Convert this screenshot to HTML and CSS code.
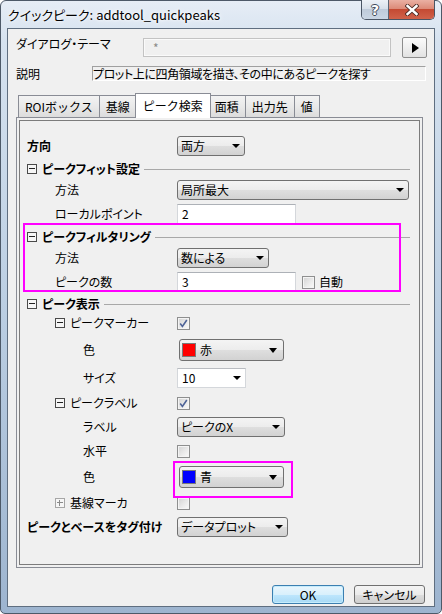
FILE: index.html
```html
<!DOCTYPE html>
<html lang="ja">
<head>
<meta charset="utf-8">
<title>クイックピーク</title>
<link rel="stylesheet" href="styles.css">
</head>
<body>
<div class="window">
  <div class="titlebar">
    <span class="title">クイックピーク: addtool_quickpeaks</span>
    <div class="caption-btns">
      <div class="cbtn help">?</div>
      <div class="cbtn close">
        <svg width="14" height="12" viewBox="0 0 14 12">
          <path d="M2.5 2 L11.5 10 M11.5 2 L2.5 10" stroke="#4a2a24" stroke-width="4.2" stroke-linecap="square" fill="none"/>
          <path d="M2.5 2 L11.5 10 M11.5 2 L2.5 10" stroke="#ffffff" stroke-width="2.4" stroke-linecap="square" fill="none"/>
        </svg>
      </div>
    </div>
  </div>
  <div class="client">
    <div class="theme-row">
      <span class="theme-label">ダイアログ・テーマ</span>
      <div class="theme-input">*</div>
      <div class="arrow-btn"><span class="tri-right"></span></div>
    </div>
    <div class="desc-row">
      <span class="desc-label">説明</span>
      <div class="desc-box">プロット上に四角領域を描き、その中にあるピークを探す</div>
    </div>
    <div class="tabs">
      <div class="tab">ROIボックス</div>
      <div class="tab">基線</div>
      <div class="tab active">ピーク検索</div>
      <div class="tab">面積</div>
      <div class="tab">出力先</div>
      <div class="tab">値</div>
    </div>
    <div class="panel">
      <div class="panel-inner">
        <div class="grid">
          <div class="lbl bold">方向</div>
          <div class="ctl"><div class="dd w68"><span class="dd-text">両方</span><span class="caret"></span></div></div>

          <div class="section"><span class="tbox minus"></span><span class="sec-text">ピークフィット設定</span><span class="sec-line"></span></div>

          <div class="lbl l1">方法</div>
          <div class="ctl"><div class="dd w232"><span class="dd-text">局所最大</span><span class="caret"></span></div></div>

          <div class="lbl l1">ローカルポイント</div>
          <div class="ctl"><div class="edit">2</div></div>

          <div class="section"><span class="tbox minus"></span><span class="sec-text">ピークフィルタリング</span><span class="sec-line"></span></div>

          <div class="lbl l1">方法</div>
          <div class="ctl"><div class="dd w92"><span class="dd-text">数による</span><span class="caret"></span></div></div>

          <div class="lbl l1">ピークの数</div>
          <div class="ctl"><div class="edit">3</div><span class="cb auto-cb"></span><span class="cb-label">自動</span></div>

          <div class="section"><span class="tbox minus"></span><span class="sec-text">ピーク表示</span><span class="sec-line"></span></div>

          <div class="lbl l1 tree-lbl"><span class="tbox minus"></span><span class="tree-text">ピークマーカー</span></div>
          <div class="ctl"><span class="cb checked"><svg width="9" height="9" viewBox="0 0 9 9"><path d="M1.2 4.6 L3.4 7.4 L7.8 1" stroke="#4e6397" stroke-width="1.6" fill="none"/></svg></span></div>

          <div class="lbl l2">色</div>
          <div class="ctl"><div class="dd color-dd"><span class="swatch red"></span><span class="dd-text">赤</span><span class="caret big"></span></div></div>

          <div class="lbl l2">サイズ</div>
          <div class="ctl"><div class="combo"><span class="dd-text">10</span><span class="caret"></span></div></div>

          <div class="lbl l1 tree-lbl"><span class="tbox minus"></span><span class="tree-text">ピークラベル</span></div>
          <div class="ctl"><span class="cb checked"><svg width="9" height="9" viewBox="0 0 9 9"><path d="M1.2 4.6 L3.4 7.4 L7.8 1" stroke="#4e6397" stroke-width="1.6" fill="none"/></svg></span></div>

          <div class="lbl l2">ラベル</div>
          <div class="ctl"><div class="dd w108"><span class="dd-text">ピークのX</span><span class="caret"></span></div></div>

          <div class="lbl l2">水平</div>
          <div class="ctl"><span class="cb"></span></div>

          <div class="lbl l2">色</div>
          <div class="ctl"><div class="dd color-dd"><span class="swatch blue"></span><span class="dd-text">青</span><span class="caret big"></span></div></div>

          <div class="lbl l1 tree-lbl"><span class="tbox plus"></span><span class="tree-text">基線マーカ</span></div>
          <div class="ctl"><span class="cb"></span></div>

          <div class="lbl bold">ピークとベースをタグ付け</div>
          <div class="ctl"><div class="dd w111"><span class="dd-text">データプロット</span><span class="caret"></span></div></div>
        </div>
      </div>
      <div class="highlight hl-filter"></div>
      <div class="highlight hl-color"></div>
    </div>
    <div class="buttons">
      <div class="btn default">OK</div>
      <div class="btn">キャンセル</div>
    </div>
  </div>
</div>
</body>
</html>
```
FILE: styles.css
```css
* { box-sizing: border-box; }
html, body { margin: 0; padding: 0; }
body {
  width: 442px;
  height: 614px;
  overflow: hidden;
  background: #ffffff;
  font-family: "Noto Sans CJK JP", "Noto Sans", sans-serif;
  font-size: 12px;
  color: #000;
  font-feature-settings: "palt";
}

.window {
  width: 442px;
  height: 614px;
  border: 1px solid #4d5968;
  border-radius: 6px 6px 5px 5px;
  background: linear-gradient(to bottom, #e6edf6 0px, #d6e2ef 40px, #bccfe3 300px, #9db4cf 614px);
  padding: 0 6px 6px;
  display: flex;
  flex-direction: column;
}

.titlebar {
  height: 27px;
  display: flex;
  align-items: center;
  padding-left: 1px;
  flex-shrink: 0;
}
.title {
  font-size: 13px;
  line-height: 16px;
  white-space: nowrap;
  color: #000;
  text-shadow: 0 0 6px #ffffff, 0 0 3px #ffffff;
}
.caption-btns {
  margin-left: auto;
  align-self: flex-start;
  margin-top: -1px;
  height: 20px;
  display: flex;
  border: 1px solid #4a5564;
  border-top: none;
  border-radius: 0 0 5px 5px;
  overflow: hidden;
}
.cbtn {
  height: 19px;
  display: flex;
  align-items: center;
  justify-content: center;
}
.help {
  width: 27px;
  border-right: 1px solid #5b6675;
  background: linear-gradient(to bottom, #edf1f6 0%, #d8e0ea 45%, #bfcbda 50%, #cad6e4 100%);
  color: #fff;
  font-weight: bold;
  font-size: 14px;
  font-family: "DejaVu Sans", sans-serif;
  text-shadow: 1px 0 0 #3f4a58, -1px 0 0 #3f4a58, 0 1px 0 #3f4a58, 0 -1px 0 #3f4a58;
}
.close {
  width: 45px;
  background: linear-gradient(to bottom, #eab0a3 0%, #dc8b79 45%, #c44a33 50%, #d0624a 100%);
}

.client {
  height: 579px;
  border: 1px solid #5f6e80;
  background: #f0f0f0;
  padding: 8px 0 0 8px;
  display: flex;
  flex-direction: column;
}

.theme-row {
  height: 21px;
  display: flex;
  align-items: flex-start;
}
.theme-label {
  width: 127px;
  line-height: 14px;
  white-space: nowrap;
}
.theme-input {
  width: 248px;
  height: 19px;
  margin-top: 1px;
  border: 1px solid #c3c3c3;
  box-shadow: inset 0 0 0 1px #fafafa;
  background: #f0f0f0;
  color: #8a8a8a;
  padding: 2px 0 0 9px;
  line-height: 14px;
}
.arrow-btn {
  width: 25px;
  height: 21px;
  margin-left: 11px;
  border: 1px solid #8d8d8d;
  border-radius: 2px;
  background: linear-gradient(to bottom, #fbfbfb 0%, #efefef 50%, #e2e2e2 100%);
  display: flex;
  align-items: center;
  justify-content: center;
}
.tri-right {
  width: 0;
  height: 0;
  border-top: 5px solid transparent;
  border-bottom: 5px solid transparent;
  border-left: 7px solid #000;
  margin-left: 2px;
}

.desc-row {
  margin-top: 8px;
  height: 15px;
  display: flex;
}
.desc-label {
  width: 76px;
  line-height: 15px;
}
.desc-box {
  width: 334px;
  height: 15px;
  border-top: 1px solid #a0a0a0;
  border-left: 1px solid #a0a0a0;
  border-bottom: 1px solid #ffffff;
  border-right: 1px solid #ffffff;
  line-height: 13px;
  letter-spacing: -0.4px;
  white-space: nowrap;
  overflow: hidden;
}

.tabs {
  margin-top: 12px;
  height: 24px;
  display: flex;
  align-items: flex-end;
  padding-left: 2px;
  position: relative;
  z-index: 2;
}
.tab {
  height: 22px;
  padding: 0 6px;
  border: 1px solid #898c95;
  border-bottom: none;
  margin-left: -1px;
  background: linear-gradient(to bottom, #f3f3f3 0%, #e9e9e9 50%, #dcdcdc 100%);
  line-height: 21px;
  white-space: nowrap;
  font-feature-settings: normal;
}
.tab:first-child { margin-left: 0; }
.tab.active {
  height: 25px;
  margin-bottom: -1px;
  margin-left: -2px;
  margin-right: -2px;
  padding: 0 7px;
  background: #ffffff;
  position: relative;
  z-index: 1;
  line-height: 23px;
}

.panel {
  width: 407px;
  height: 451px;
  border: 1px solid #898c95;
  padding: 2px;
  position: relative;
  background: #f0f0f0;
  flex-shrink: 0;
}
.panel-inner {
  height: 100%;
  border: 1px solid #7c7c7c;
}
.grid {
  display: grid;
  grid-template-columns: 150px 1fr;
  grid-template-rows: 24px 22px 20px 28px 18px 24px 24px 20px 18px 36px 20px 30px 18px 30px 22px 30px 18px;
  align-items: center;
  padding: 13px 9px 0 7px;
}
.lbl {
  line-height: 14px;
  white-space: nowrap;
}
.bold { font-weight: bold; }
.l1 { padding-left: 28px; }
.l2 { padding-left: 56px; }
.tree-lbl {
  display: flex;
  align-items: center;
}
.tree-text { margin-left: 5px; }
.ctl {
  display: flex;
  align-items: center;
  height: 100%;
}

.section {
  grid-column: 1 / -1;
  display: flex;
  align-items: center;
}
.sec-text {
  font-weight: bold;
  margin-left: 5px;
  line-height: 14px;
  white-space: nowrap;
}
.sec-line {
  flex: 1;
  height: 1px;
  background: #a8a8a8;
  margin-left: 4px;
}

.tbox {
  width: 10px;
  height: 10px;
  border: 1px solid #4a4a4a;
  background: #f6f6f6;
  position: relative;
  flex-shrink: 0;
}
.tbox::before {
  content: "";
  position: absolute;
  left: 1px;
  right: 1px;
  top: 3px;
  height: 1px;
  background: #222;
}
.tbox.plus {
  border-color: #a6a6a6;
}
.tbox.plus::before { background: #8a8a8a; }
.tbox.plus::after {
  content: "";
  position: absolute;
  top: 1px;
  bottom: 1px;
  left: 3px;
  width: 1px;
  background: #8a8a8a;
}

.dd {
  height: 20px;
  border: 1px solid #707070;
  border-radius: 3px;
  background: linear-gradient(to bottom, #f4f4f4 0%, #ececec 50%, #dedede 52%, #d2d2d2 100%);
  display: flex;
  align-items: center;
  padding-left: 3px;
  white-space: nowrap;
}
.dd-text {
  flex: 1;
  line-height: 14px;
}
.caret {
  width: 0;
  height: 0;
  border-left: 4px solid transparent;
  border-right: 4px solid transparent;
  border-top: 4px solid #000;
  margin-right: 4px;
}
.caret.big {
  border-left-width: 4px;
  border-right-width: 4px;
  border-top-width: 5px;
  margin-right: 6px;
}
.w68 { width: 68px; }
.w92 { width: 92px; }
.w108 { width: 108px; }
.w111 { width: 111px; }
.w232 { width: 232px; }
.color-dd {
  width: 105px;
  height: 22px;
  margin-left: 2px;
  padding-left: 2px;
}
.swatch {
  width: 14px;
  height: 14px;
  border: 1px solid #7a7a7a;
  margin-right: 4px;
  flex-shrink: 0;
}
.swatch.red { background: #ff0000; }
.swatch.blue { background: #0000ff; }

.combo {
  width: 69px;
  height: 20px;
  border: 1px solid #d4d7db;
  border-top-color: #b9bcc1;
  background: #ffffff;
  display: flex;
  align-items: center;
  padding-left: 4px;
}

.edit {
  width: 119px;
  height: 20px;
  border: 1px solid #d4d7db;
  border-top-color: #adb1b7;
  background: #ffffff;
  padding-left: 4px;
  line-height: 18px;
}

.cb {
  width: 13px;
  height: 13px;
  border: 1px solid #8e8f8f;
  background: linear-gradient(135deg, #d2d2d2 0%, #ececec 60%, #fafafa 100%);
  box-shadow: inset 0 0 0 1px #f4f4f4;
  display: flex;
  align-items: center;
  justify-content: center;
  flex-shrink: 0;
}
.auto-cb { margin-left: 6px; }
.cb-label { margin-left: 4px; line-height: 14px; }

.highlight {
  position: absolute;
  border: 2px solid #ff00ff;
  pointer-events: none;
}
.hl-filter {
  left: 6px;
  top: 105px;
  width: 378px;
  height: 69px;
}
.hl-color {
  left: 156px;
  top: 343px;
  width: 120px;
  height: 37px;
}

.buttons {
  margin-top: 17px;
  display: flex;
  justify-content: flex-end;
  gap: 10px;
  padding-right: 9px;
}
.btn {
  width: 71px;
  height: 19px;
  border: 1px solid #707070;
  border-radius: 3px;
  background: linear-gradient(to bottom, #f4f4f4 0%, #ebebeb 50%, #dddddd 52%, #cfcfcf 100%);
  display: flex;
  align-items: center;
  justify-content: center;
  line-height: 14px;
}
.btn.default {
  width: 72px;
  border-color: #3c7fb1;
  background: linear-gradient(to bottom, #eaf6fd 0%, #d9f0fc 50%, #bee6fd 52%, #a7d9f5 100%);
  box-shadow: inset 0 0 0 1px #c6ecfc;
}
```
